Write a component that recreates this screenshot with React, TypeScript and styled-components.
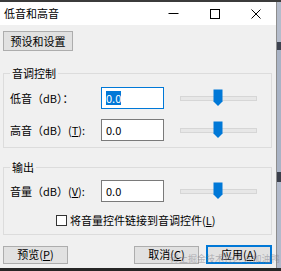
import styled, { createGlobalStyle } from 'styled-components';

const GlobalStyle = createGlobalStyle`
  html, body {
    margin: 0;
    padding: 0;
    background: #2a2a2a;
  }
  body {
    font-family: "Noto Sans CJK SC", "Liberation Sans", sans-serif;
    font-size: 11px;
    color: #000;
  }
`;

const Screen = styled.div`
  width: 281px;
  height: 271px;
  display: flex;
  flex-direction: column;
  overflow: hidden;
  position: relative;
`;

const TopEdge = styled.div`
  height: 2px;
  background: #3b3b3b;
`;

const Middle = styled.div`
  flex: 1;
  display: flex;
  min-height: 0;
`;

const Dialog = styled.div`
  width: 276px;
  display: flex;
  flex-direction: column;
  background: #f0f0f0;
  border-right: 1px solid #8d8d8d;
`;

const RightEdge = styled.div`
  flex: 1;
  background: linear-gradient(
    to bottom,
    #b4bccb 0,
    #b4bccb 40px,
    #3d4350 40px,
    #3d4350 48px,
    #a9b3c5 48px,
    #a9b3c5 170px,
    #3a3f4b 170px,
    #3a3f4b 180px,
    #b2bacb 180px
  );
`;

const BottomEdge = styled.div`
  height: 3px;
  background: #262626;
`;

const TitleBar = styled.div`
  height: 23px;
  background: #fff;
  display: flex;
  align-items: center;
`;

const Title = styled.div`
  flex: 1;
  padding-left: 4px;
  font-size: 11px;
  line-height: 23px;
`;

const CaptionButton = styled.div`
  width: 41px;
  height: 23px;
  display: flex;
  align-items: center;
  justify-content: center;
`;

const Body = styled.div`
  flex: 1;
  display: flex;
  flex-direction: column;
  padding: 6px 4px 0 3px;
`;

const Button = styled.div<{ $primary?: boolean; $width?: number }>`
  box-sizing: border-box;
  width: ${(p) => p.$width ?? 65}px;
  height: ${(p) => (p.$primary ? 19 : 18)}px;
  display: flex;
  align-items: center;
  justify-content: center;
  background: #e1e1e1;
  border: ${(p) => (p.$primary ? '2px solid #0078d7' : '1px solid #adadad')};
  font-size: 11px;
  line-height: 1;
`;

const PresetButton = styled(Button)`
  height: 20px;
  width: 70px;
`;

const Group = styled.fieldset<{ $top: number; $bottom: number }>`
  margin: ${(p) => p.$top}px 0 0 0;
  padding: 0 6px ${(p) => p.$bottom}px 6px;
  border: 1px solid #dcdcdc;
  min-width: 0;
`;

const Legend = styled.legend`
  padding: 0 2px;
  margin-left: 0;
  font-size: 11px;
  line-height: 14px;
`;

const FieldRow = styled.div<{ $gap?: number }>`
  display: flex;
  align-items: center;
  height: 22px;
  margin-top: ${(p) => p.$gap ?? 0}px;
`;

const FieldLabel = styled.div`
  width: 91px;
  font-size: 11px;
  white-space: nowrap;
`;

const InputBox = styled.div<{ $focused?: boolean }>`
  box-sizing: border-box;
  width: 63px;
  height: 22px;
  background: #fff;
  border: 1px solid ${(p) => (p.$focused ? '#0078d7' : '#7a7a7a')};
  display: flex;
  align-items: center;
  padding-left: 4px;
  font-size: 11px;
`;

const Selected = styled.span`
  background: #0078d7;
  color: #fff;
  line-height: 14px;
`;

const Slider = styled.div`
  position: relative;
  margin-left: 16px;
  width: 77px;
  height: 22px;
  display: flex;
  align-items: center;
`;

const Track = styled.div`
  width: 100%;
  height: 3px;
  background: #e7e7e7;
  border: 1px solid #d6d6d6;
`;

const Thumb = styled.svg`
  position: absolute;
  left: 33px;
  top: 2px;
`;

const CheckRow = styled.div`
  display: flex;
  align-items: center;
  height: 16px;
  margin-top: 10px;
  padding-left: 46px;
  font-size: 11px;
`;

const CheckBox = styled.div`
  box-sizing: border-box;
  width: 11px;
  height: 11px;
  border: 1px solid #333;
  background: #fff;
  margin-right: 3px;
`;

const Footer = styled.div`
  display: flex;
  align-items: center;
  margin-top: 10px;
`;

const Spacer = styled.div`
  flex: 1;
`;

const Watermark = styled.div`
  position: absolute;
  left: 170px;
  top: 252px;
  font-size: 9px;
  color: rgba(120, 120, 130, 0.5);
  white-space: nowrap;
  pointer-events: none;
`;

const SliderControl = () => (
  <Slider>
    <Track />
    <Thumb width='10' height='18' viewBox='0 0 10 18'>
      <path d='M0.5 0.5 H9.5 V12.5 L5 17 L0.5 12.5 Z' fill='#0078d7' />
    </Thumb>
  </Slider>
);

const App = () => {
  return (
    <Screen>
      <GlobalStyle />
      <TopEdge />
      <Middle>
        <Dialog>
          <TitleBar>
            <Title>低音和高音</Title>
            <CaptionButton>
              <svg width='11' height='11' viewBox='0 0 11 11'>
                <path d='M0.5 5.5 H10.5' stroke='#000' strokeWidth='1' />
              </svg>
            </CaptionButton>
            <CaptionButton>
              <svg width='10' height='10' viewBox='0 0 10 10'>
                <rect x='0.5' y='0.5' width='9' height='9' fill='none' stroke='#000' strokeWidth='1' />
              </svg>
            </CaptionButton>
            <CaptionButton>
              <svg width='10' height='10' viewBox='0 0 10 10'>
                <path d='M0.5 0.5 L9.5 9.5 M9.5 0.5 L0.5 9.5' stroke='#000' strokeWidth='1' />
              </svg>
            </CaptionButton>
          </TitleBar>
          <Body>
            <PresetButton>预设和设置</PresetButton>

            <Group $top={15} $bottom={6}>
              <Legend>音调控制</Legend>
              <FieldRow $gap={7}>
                <FieldLabel>低音（dB）：</FieldLabel>
                <InputBox $focused>
                  <Selected>0.0</Selected>
                </InputBox>
                <SliderControl />
              </FieldRow>
              <FieldRow $gap={10}>
                <FieldLabel>
                  高音（dB）(<u>T</u>):
                </FieldLabel>
                <InputBox>0.0</InputBox>
                <SliderControl />
              </FieldRow>
            </Group>

            <Group $top={12} $bottom={6}>
              <Legend>输出</Legend>
              <FieldRow $gap={6}>
                <FieldLabel>
                  音量（dB）(<u>V</u>):
                </FieldLabel>
                <InputBox>0.0</InputBox>
                <SliderControl />
              </FieldRow>
              <CheckRow>
                <CheckBox />
                将音量控件链接到音调控件(<u>L</u>)
              </CheckRow>
            </Group>

            <Footer>
              <Button>
                预览(<u>P</u>)
              </Button>
              <Spacer />
              <Button>
                取消(<u>C</u>)
              </Button>
              <Button $primary $width={66} style={{ marginLeft: 7 }}>
                应用(<u>A</u>)
              </Button>
            </Footer>
          </Body>
        </Dialog>
        <RightEdge />
      </Middle>
      <BottomEdge />
      <Watermark>稀土掘金技术社区 @加油鸭</Watermark>
    </Screen>
  );
};

export default App;
